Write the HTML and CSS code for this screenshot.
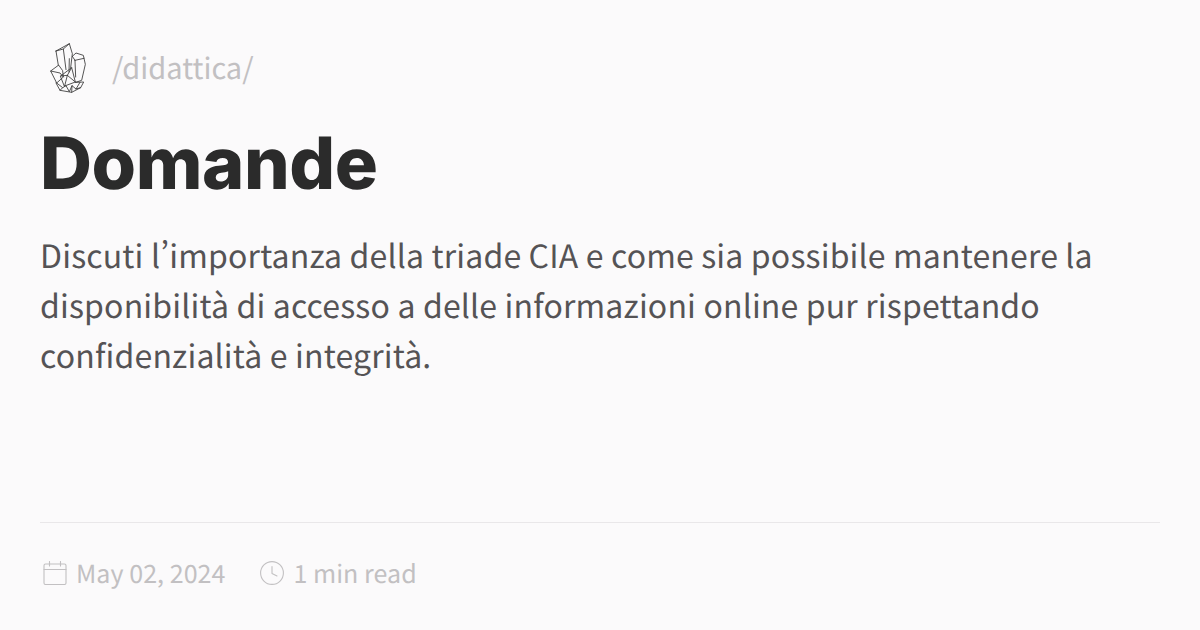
FILE: index.html
```html
<!DOCTYPE html>
<html lang="it">
<head>
<meta charset="utf-8">
<title>Domande</title>
<link rel="stylesheet" href="styles.css">
</head>
<body>
<main class="card">
  <header class="crumb">
    <svg class="logo" viewBox="60 35 111 159" fill="none" stroke="#3a3a3a" stroke-width="2.6" stroke-linejoin="round" stroke-linecap="round">
      <path d="M78 62 L118 40 L127 70 L122 112 M78 62 L85 105 M78 62 L100 56 L108 118 M118 40 L100 56"/>
      <path d="M127 78 L138 68 L160 75 L166 102 L155 150 L137 156 M135 90 L162 84 M135 90 L137 140 M127 78 L135 90 M118 85 L117 125"/>
      <path d="M85 105 L62 122 L80 158 L100 140 L98 122 Z M62 122 L90 128 L100 140"/>
      <path d="M92 137 L125 112 L136 155 L104 167 Z M125 112 L112 135 L92 137 M112 135 L136 155 M112 135 L104 167"/>
      <path d="M78 158 L90 180 L125 186 L152 172 L161 155 L137 156 M80 158 L98 172 L108 166 L118 184 L126 166 L138 176 L150 156 M90 180 L98 172 M125 186 L126 166 M152 172 L138 176"/>
    </svg>
    <span class="path">/didattica/</span>
  </header>
  <h1 class="title">Domande</h1>
  <p class="lead">Discuti l’importanza della triade CIA e come sia possibile mantenere la disponibilità di accesso a delle informazioni online pur rispettando confidenzialità e integrità.</p>
  <footer class="meta">
    <span class="meta-item">
      <svg class="icon" viewBox="0 0 24 24" fill="none" stroke="#c2c0c2" stroke-width="1.1" stroke-linecap="round" stroke-linejoin="round">
        <rect x="1" y="3" width="22" height="20.5" rx="1.5"/>
        <path d="M1 8.5 H23 M6.5 0.5 V5 M17.5 0.5 V5"/>
      </svg>
      May 02, 2024
    </span>
    <span class="meta-item">
      <svg class="icon" viewBox="0 0 24 24" fill="none" stroke="#c2c0c2" stroke-width="1.1" stroke-linecap="round" stroke-linejoin="round">
        <circle cx="12" cy="12" r="11.4"/>
        <path d="M12 5.5 V12.5 L17 15"/>
      </svg>
      1 min read
    </span>
  </footer>
</main>
</body>
</html>
```
FILE: styles.css
```css
* { box-sizing: border-box; }
html, body { margin: 0; height: 100%; }
body {
  background: #fbfafb;
  font-family: "Noto Sans CJK SC", "Noto Sans", sans-serif;
  text-rendering: geometricPrecision;
}
.card {
  width: 1200px;
  height: 630px;
  padding: 40px;
  display: flex;
  flex-direction: column;
  overflow: hidden;
}
.crumb {
  display: flex;
  align-items: center;
  gap: 25px;
  height: 56px;
  padding-left: 10px;
}
.logo { width: 37px; height: 53px; }
.path { font-size: 29px; color: #c2c0c2; margin-top: -3px; }
.title {
  margin: 23px 0 0;
  font-family: "Inter", "Liberation Sans", sans-serif;
  font-size: 72px;
  line-height: 90px;
  font-weight: 800;
  letter-spacing: -0.45px;
  color: #2b2b2b;
}
.lead {
  margin: 21px 0 0;
  font-size: 32px;
  line-height: 50px;
  letter-spacing: 0.165px;
  font-feature-settings: "pwid";
  color: #555355;
}
.meta {
  margin-top: auto;
  border-top: 1px solid #e9e7e9;
  display: flex;
  gap: 32px;
  padding-top: 30px;
  height: 68px;
  font-size: 25px;
  letter-spacing: 0.05px;
  color: #c2c0c2;
}
.meta-item { display: flex; align-items: center; gap: 9px; height: 40px; }
.icon { width: 24px; height: 24px; margin-left: 3px; }
```
